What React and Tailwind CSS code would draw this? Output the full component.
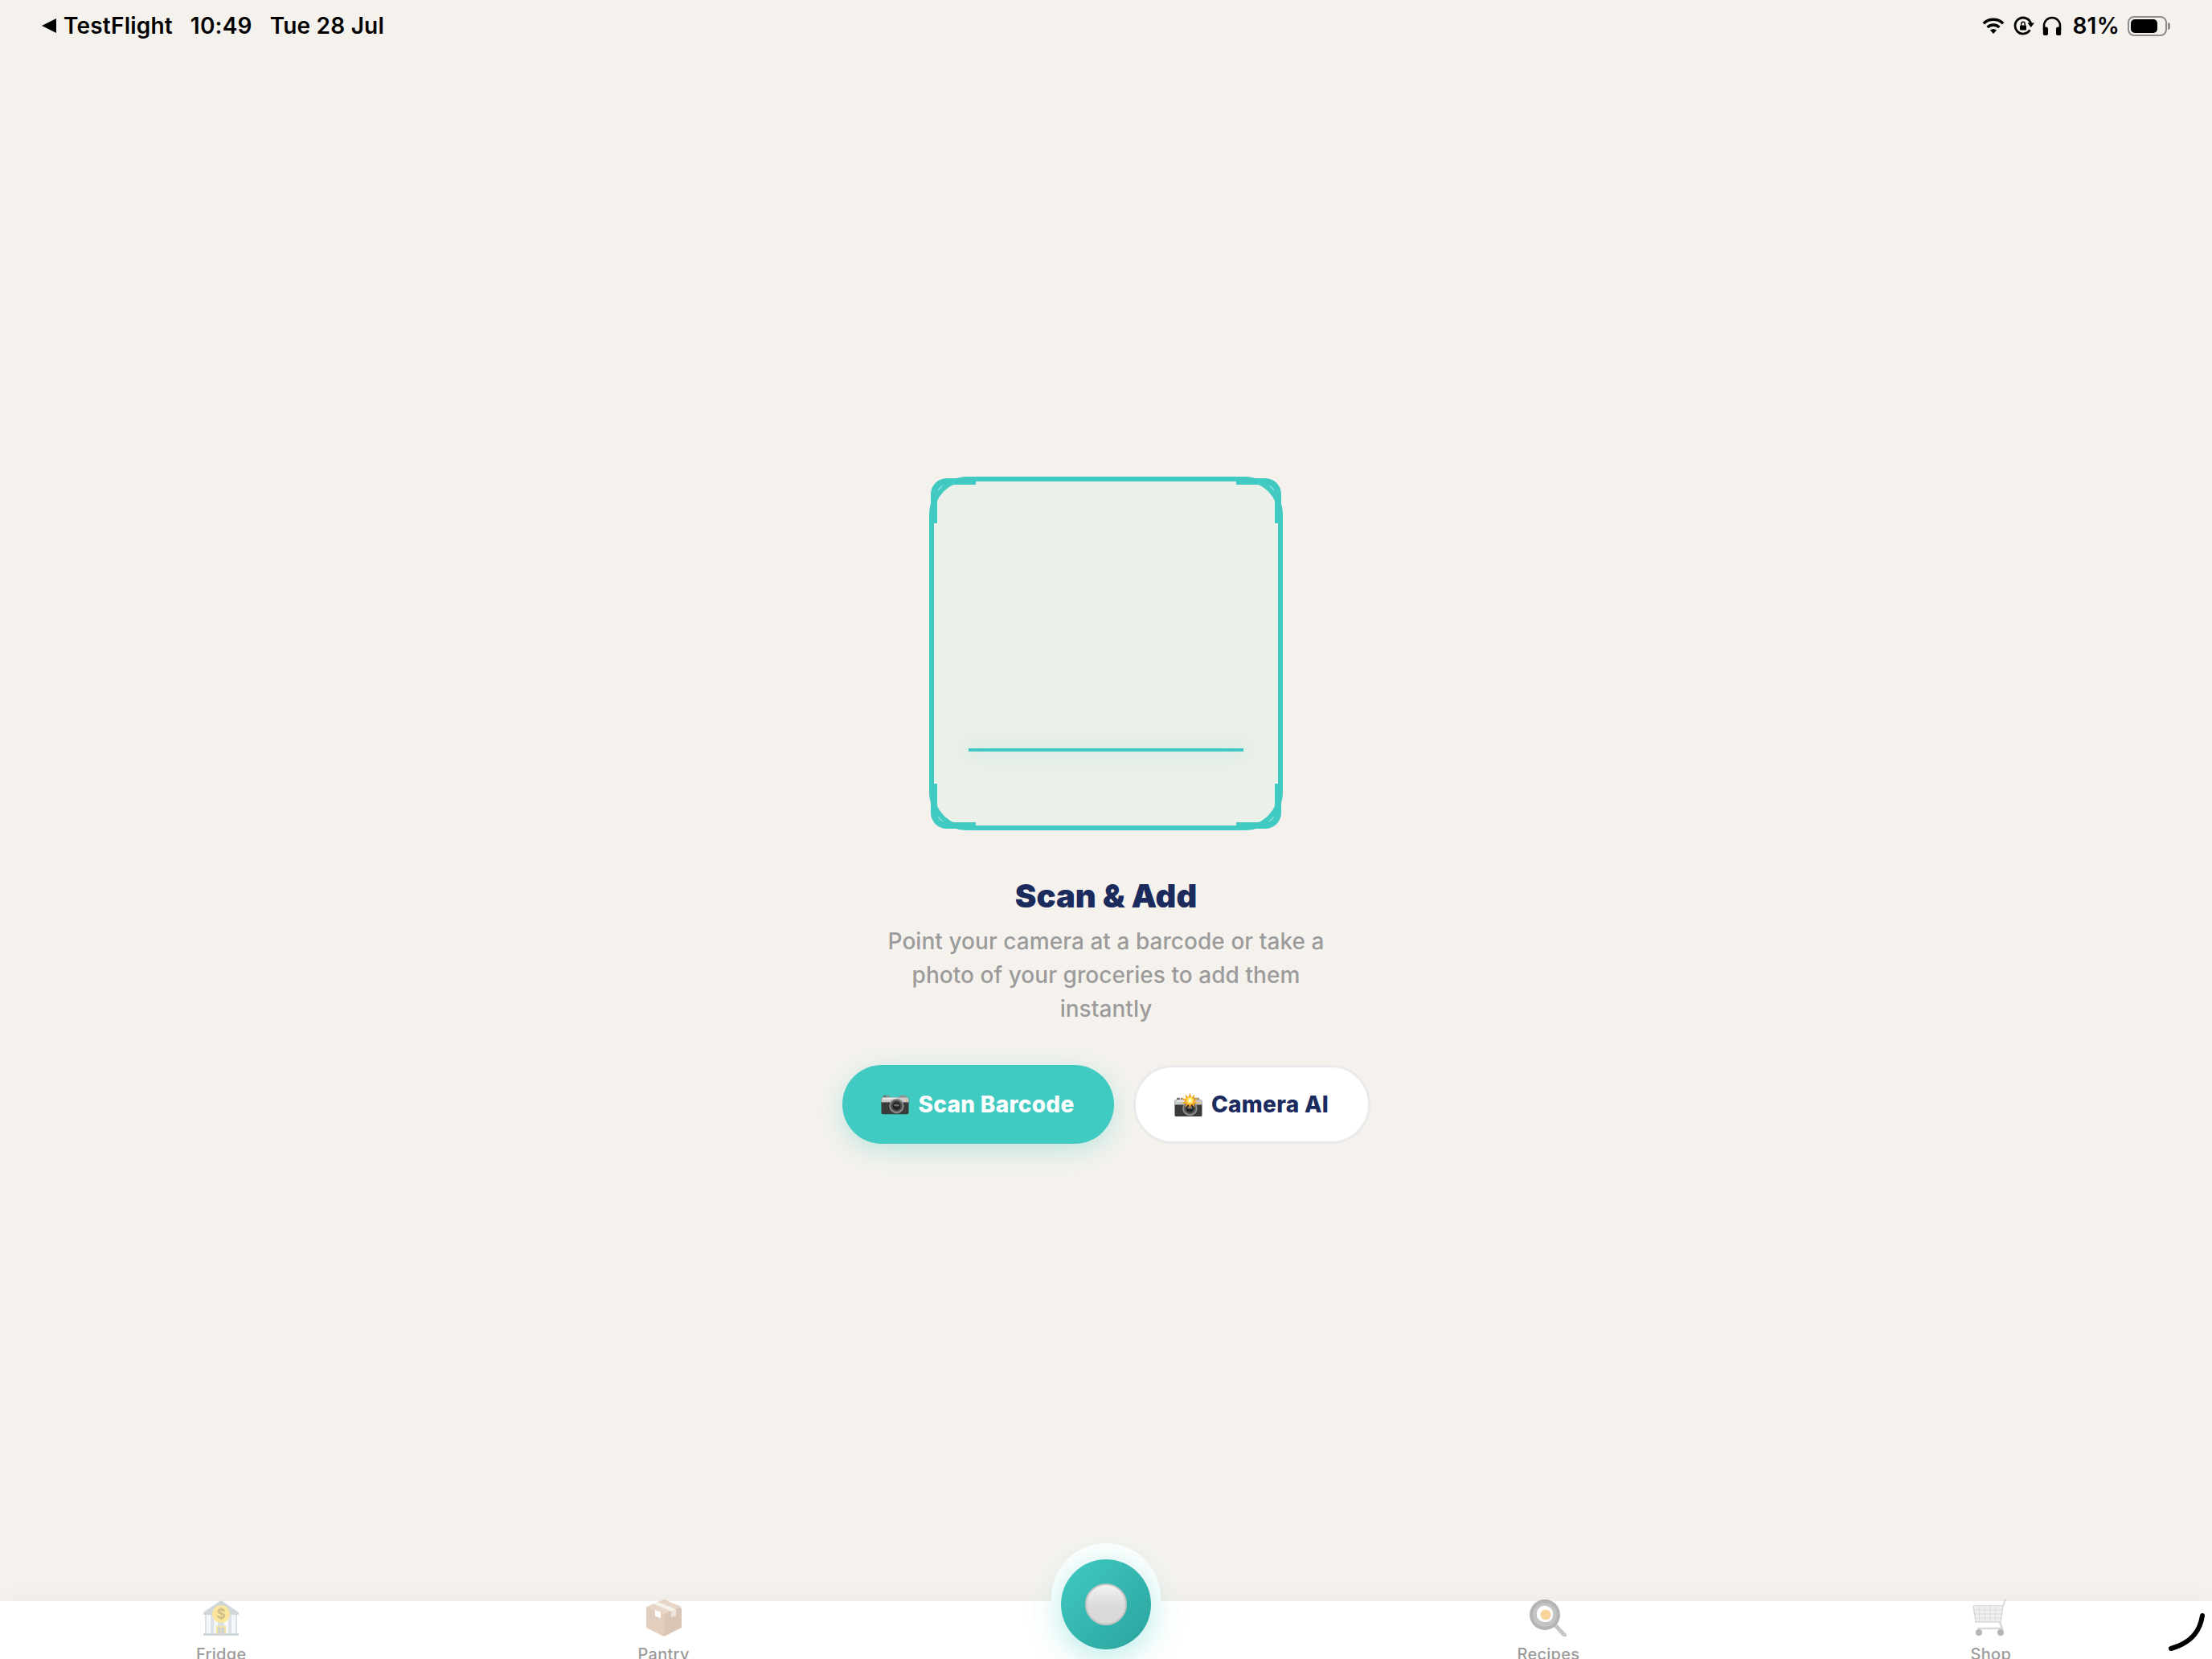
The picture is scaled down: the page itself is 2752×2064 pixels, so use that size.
import React from "react";

const font = "font-['Inter','Liberation_Sans',sans-serif]";

const CameraBody = () => (
  <>
    <rect x="3" y="1.5" width="4" height="3" fill="#6f6f6f" />
    <rect x="8" y="1.5" width="3" height="3" fill="#8a8a8a" />
    <rect x="24" y="1.5" width="8" height="6" fill="#8f8f8f" />
    <rect x="0.5" y="4" width="35" height="21.5" rx="2" fill="#3a3a3a" />
    <path d="M0.5 6a2 2 0 0 1 2-2h31a2 2 0 0 1 2 2v4h-35z" fill="#c9c9c9" />
    <rect x="3" y="4.5" width="18" height="2" fill="#ededed" />
    <rect x="0.5" y="10" width="35" height="1" fill="#777" />
    <circle cx="20" cy="15" r="9.5" fill="#8b8b8b" />
    <circle cx="20" cy="15" r="7.5" fill="#4d4d4d" />
    <circle cx="20" cy="15" r="5" fill="#222" />
    <ellipse cx="20" cy="14" rx="3.5" ry="1.6" fill="#6d6d6d" />
    <circle cx="32.5" cy="8" r="1" fill="#e8b93a" />
  </>
);

const CameraIcon = () => (
  <svg width="35" height="26" viewBox="0 0 36 26" className="shrink-0">
    <CameraBody />
  </svg>
);

const CameraFlashIcon = () => (
  <svg width="35" height="31" viewBox="0 0 36 31" className="shrink-0">
    <g transform="translate(0 5)">
      <CameraBody />
    </g>
    <path
      d="M20 0l2 6 4-4-1 6 6-1-5 4 5 3-6 0 1 5-4-4-2 5-2-5-4 4 1-5-6 0 5-3-5-4 6 1-1-6 4 4z"
      fill="#f5a623"
    />
    <circle cx="20" cy="10" r="4.5" fill="#ffe25a" />
    <circle cx="20" cy="10" r="2.2" fill="#fffbe0" />
  </svg>
);

const BankIcon = () => (
  <svg width="44" height="44" viewBox="0 0 44 44">
    <path d="M22 0L44 15v3H0v-3z" fill="#a3b0b9" />
    <rect x="2" y="18" width="40" height="23" fill="#bcc7ce" />
    <rect x="4" y="18" width="5" height="23" fill="#eef1f3" />
    <rect x="13" y="18" width="5" height="23" fill="#eef1f3" />
    <rect x="26" y="18" width="5" height="23" fill="#eef1f3" />
    <rect x="35" y="18" width="5" height="23" fill="#eef1f3" />
    <rect x="0" y="41" width="44" height="3" fill="#a3b0b9" />
    <rect x="16" y="32" width="12" height="10" fill="#e9c542" />
    <rect x="18" y="34" width="3.5" height="8" fill="#9aa8b0" />
    <rect x="22.5" y="34" width="3.5" height="8" fill="#9aa8b0" />
    <circle cx="22" cy="17" r="11" fill="#f6cf3d" />
    <text x="22" y="23" textAnchor="middle" fontSize="17" fontWeight="700" fill="#a67c12" fontFamily="Inter, sans-serif">
      $
    </text>
  </svg>
);

const BoxIcon = () => (
  <svg width="44" height="46" viewBox="0 0 44 46">
    <path d="M22 0L44 11v24L22 46z" fill="#b48f70" />
    <path d="M22 12L0 9v26l22 11z" fill="#c59f80" />
    <path d="M22 0L44 9 22 18 0 9z" fill="#d2b193" />
    <path d="M9 5.5L31 14.5l6-2.5L14 3z" fill="#efe6da" />
    <path d="M31 14.5l6-2.5v8l-6 2.5z" fill="#d9cdbf" />
    <path d="M11 13l7 2.5v8l-7-3z" fill="#ffffff" />
  </svg>
);

const PanIcon = () => (
  <svg width="46" height="46" viewBox="0 0 46 46">
    <path d="M31 31L44 45" stroke="#8c8c8c" strokeWidth="5" strokeLinecap="round" />
    <circle cx="19" cy="19" r="19" fill="#6b6b6b" />
    <circle cx="19" cy="19" r="15" fill="#8a8a8a" />
    <path d="M9 20c-1-8 5-13 11-12s10 5 9 12-6 8-9 8-10-1-11-8z" fill="#fff" />
    <circle cx="20" cy="19" r="6.5" fill="#f3ac3c" />
  </svg>
);

const CartIcon = () => (
  <svg width="46" height="46" viewBox="0 0 46 46" fill="none">
    <path d="M1 8h37l3-8" stroke="#b5b5b5" strokeWidth="2" />
    <path d="M1 8l3 20h31l3-20" fill="#e3e3e3" stroke="#b5b5b5" strokeWidth="1.5" />
    <path d="M8 8l1 20M15 8l1 20M22 8v20M29 8l-1 20M2 13h35M3 18h34M3.5 23h33" stroke="#a8a8a8" strokeWidth="0.8" />
    <path d="M34 28l3 8H6" stroke="#b5b5b5" strokeWidth="2.5" />
    <circle cx="8" cy="41" r="4" fill="#6f6f6f" />
    <circle cx="35" cy="41" r="4" fill="#6f6f6f" />
  </svg>
);

const WifiIcon = () => (
  <svg width="28" height="20" viewBox="0 0 28 20" fill="none" stroke="#000">
    <path d="M1.8 7.2A17.5 17.5 0 0 1 26.2 7.2" strokeWidth="3.4" />
    <path d="M6.6 12A10.7 10.7 0 0 1 21.4 12" strokeWidth="3.4" />
    <path d="M14 20L9.9 15.6A5.9 5.9 0 0 1 18.1 15.6Z" fill="#000" stroke="none" />
  </svg>
);

const RotationLockIcon = () => (
  <svg width="26" height="26" viewBox="0 0 26 26" fill="none">
    <path d="M20.5 18.3A10 10 0 1 1 21.7 10.6" stroke="#000" strokeWidth="2.8" />
    <path d="M17.5 9.5H26L21.7 15z" fill="#000" />
    <rect x="8" y="12.5" width="8" height="6" rx="1" fill="#000" />
    <path d="M9.8 13V10.5a2.2 2.2 0 0 1 4.4 0V13" stroke="#000" strokeWidth="1.4" />
  </svg>
);

const HeadphonesIcon = () => (
  <svg width="24" height="24" viewBox="0 0 24 24" fill="none">
    <path d="M2 17V12a10 10 0 0 1 20 0v5" stroke="#000" strokeWidth="2.6" />
    <rect x="0.8" y="13.5" width="6.2" height="10.5" rx="2.6" fill="#000" />
    <rect x="17" y="13.5" width="6.2" height="10.5" rx="2.6" fill="#000" />
  </svg>
);

const tabs = [
  { label: "Fridge", icon: <BankIcon /> },
  { label: "Pantry", icon: <BoxIcon /> },
  null,
  { label: "Recipes", icon: <PanIcon /> },
  { label: "Shop", icon: <CartIcon /> },
];

const Corner = ({ className }) => (
  <div className={`absolute w-[56px] h-[56px] border-[#40CAC2] ${className}`} />
);

const App = () => {
  return (
    <div className={`relative w-[2752px] h-[2064px] overflow-hidden flex flex-col bg-[#F5F2ED] ${font}`}>
      {/* Status bar */}
      <div className="h-[64px] shrink-0 pl-[52px] pr-[52px] flex items-center justify-between text-black text-[28px] font-semibold tracking-[0.2px]">
        <div className="flex items-center">
          <div className="w-0 h-0 border-y-[9px] border-y-transparent border-r-[18px] border-r-black mr-[9px]" />
          <span>TestFlight</span>
          <span className="ml-[22px]">10:49</span>
          <span className="ml-[22px]">Tue 28 Jul</span>
        </div>
        <div className="flex items-center">
          <WifiIcon />
          <div className="ml-[11px]">
            <RotationLockIcon />
          </div>
          <div className="ml-[10px]">
            <HeadphonesIcon />
          </div>
          <span className="ml-[14px]">81%</span>
          <div className="ml-[10px] flex items-center">
            <div className="w-[49px] h-[25px] rounded-[8px] border-2 border-[#8E8E8E] p-[2px]">
              <div className="w-[33px] h-full rounded-[5px] bg-black" />
            </div>
            <div className="ml-[1px] w-[3px] h-[9px] rounded-r-full bg-[#8E8E8E]" />
          </div>
        </div>
      </div>

      {/* Scanner */}
      <div className="flex-1 flex flex-col items-center pt-[529px]">
        <div className="relative w-[440px] h-[440px] rounded-[48px] border-[6px] border-[#40CAC2] bg-[#ECF0EA]">
          <Corner className="top-[-4px] left-[-4px] border-t-[8px] border-l-[8px] rounded-tl-[20px]" />
          <Corner className="top-[-4px] right-[-4px] border-t-[8px] border-r-[8px] rounded-tr-[20px]" />
          <Corner className="bottom-[-4px] left-[-4px] border-b-[8px] border-l-[8px] rounded-bl-[20px]" />
          <Corner className="bottom-[-4px] right-[-4px] border-b-[8px] border-r-[8px] rounded-br-[20px]" />
          <div className="absolute left-[10%] right-[10%] top-[332px] h-[4px] bg-[#40CAC2] shadow-[0_0_24px_rgba(64,202,194,0.5)]" />
        </div>

        <h1 className="mt-[58px] text-[40px] leading-[48px] font-black text-[#1B2B5E]">Scan &amp; Add</h1>
        <p className="mt-[11px] w-[560px] text-center text-[28px] leading-[42px] font-medium tracking-[0.05px] text-[#9B9B9B]">
          Point your camera at a barcode or take a photo of your groceries to add them instantly
        </p>

        <div className="mt-[49px] flex gap-[24px]">
          <button className="h-[98px] w-[338px] rounded-full bg-[#40CAC2] flex items-center justify-center gap-[11px] text-[28px] font-extrabold tracking-[0.3px] text-white shadow-[0_8px_32px_rgba(64,202,194,0.3)]">
            <CameraIcon />
            Scan Barcode
          </button>
          <button className="h-[98px] w-[295px] rounded-full bg-white border-[3px] border-[#EAEAEA] flex items-center justify-center gap-[11px] text-[28px] font-extrabold tracking-[0.3px] text-[#1B2B5E]">
            <CameraFlashIcon />
            Camera AI
          </button>
        </div>
      </div>

      {/* Tab bar */}
      <div className="relative h-[72px] shrink-0 bg-white grid grid-cols-5 shadow-[0_-4px_32px_rgba(0,0,0,0.03)]">
        {tabs.map((tab, i) =>
          tab ? (
            <div key={i} className="flex flex-col items-center -mt-[2px]">
              <div className="h-[46px] flex items-center justify-center opacity-50">{tab.icon}</div>
              <span className="mt-[10px] text-[20px] leading-[24px] font-medium tracking-[0.3px] text-[#9B9B9B]">{tab.label}</span>
            </div>
          ) : (
            <div key={i} />
          )
        )}

        {/* Centre button */}
        <div className="absolute top-[-72px] left-[1308px] w-[136px] h-[136px] rounded-full bg-white flex justify-center pt-[20px]">
          <div className="w-[112px] h-[112px] rounded-full bg-gradient-to-br from-[#40CAC2] to-[#2AA39D] flex items-center justify-center shadow-[0_8px_40px_rgba(64,202,194,0.4)]">
            <div className="w-[52px] h-[52px] rounded-full bg-gradient-to-b from-[#F4F4F4] via-[#DCDCDC] to-[#D8D8D8] border-[2px] border-[#C4C4C4]" />
          </div>
        </div>

        {/* Pencil stroke */}
        <svg className="absolute left-[2694px] top-[14px]" width="52" height="52" viewBox="0 0 52 52" fill="none">
          <path d="M46 4C43 24 32 38 7 45" stroke="#000" strokeWidth="6" strokeLinecap="round" />
        </svg>
      </div>
    </div>
  );
};

export default App;
